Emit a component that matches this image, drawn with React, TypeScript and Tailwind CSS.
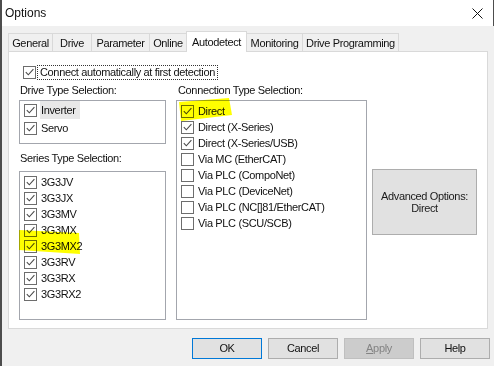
import React from "react";

function Check({ checked }: { checked: boolean }) {
  return (
    <span className="w-[13px] h-[13px] shrink-0 border border-[#6d6d6d] bg-white flex items-center justify-center">
      {checked && (
        <svg width="11" height="11" viewBox="0 0 11 11">
          <path d="M1.8 5.2 L4.3 7.8 L9.4 2.2" stroke="#4a4a4a" strokeWidth="1.1" fill="none" />
        </svg>
      )}
    </span>
  );
}

function Row({ label, checked, h = 16, sel }: { label: string; checked: boolean; h?: number; sel?: boolean }) {
  return (
    <div className={`flex items-center pl-[4px] gap-[3px] ${h === 18 ? "h-[18px]" : "h-[16px]"}`}>
      <Check checked={checked} />
      <span className={`px-[1px] leading-[18px] whitespace-nowrap ${sel ? "bg-[#e8e8e8] pr-[4px]" : ""}`}>{label}</span>
    </div>
  );
}

const tabs = [
  { name: "General", w: "w-[45px]" },
  { name: "Drive", w: "w-[40px]" },
  { name: "Parameter", w: "w-[59px]" },
  { name: "Online", w: "w-[38px]" },
  { name: "Autodetect", w: "w-[61px]", active: true },
  { name: "Monitoring", w: "w-[57px]" },
  { name: "Drive Programming", w: "w-[97px]" },
];

const series = ["3G3JV", "3G3JX", "3G3MV", "3G3MX", "3G3MX2", "3G3RV", "3G3RX", "3G3RX2"];

const conns: [string, boolean][] = [
  ["Direct", true],
  ["Direct (X-Series)", true],
  ["Direct (X-Series/USB)", true],
  ["Via MC (EtherCAT)", false],
  ["Via PLC (CompoNet)", false],
  ["Via PLC (DeviceNet)", false],
  ["Via PLC (NC[]81/EtherCAT)", false],
  ["Via PLC (SCU/SCB)", false],
];

export default function App() {
  return (
    <div className="w-[494px] h-[366px] flex flex-col bg-[#f0f0f0] border-l-2 border-[#4d4d4d] font-['Liberation_Sans',sans-serif] text-[11px] tracking-[-0.35px] text-[#111] overflow-hidden">
      {/* Title bar */}
      <div className="h-[26px] shrink-0 bg-white flex items-center justify-between pl-[3px] pr-[10px] border-r border-[#4d4d4d]">
        <span className="text-[12px] tracking-normal">Options</span>
        <svg width="11" height="11" viewBox="0 0 11 11">
          <path d="M0.5 0.5 L10.5 10.5 M10.5 0.5 L0.5 10.5" stroke="#111" strokeWidth="1" />
        </svg>
      </div>

      <div className="flex-1 flex flex-col pt-[7px] px-[6px]">
        {/* Tabs */}
        <div className="flex items-end h-[18px] relative z-10">
          {tabs.map((t) =>
            t.active ? (
              <div
                key={t.name}
                className={`${t.w} h-[21px] -mb-[1px] -mr-px bg-white border border-b-0 border-[#d9d9d9] flex items-start justify-center pt-[2px] whitespace-nowrap relative z-10`}
              >
                {t.name}
              </div>
            ) : (
              <div
                key={t.name}
                className={`${t.w} h-[18px] border-t border-l border-r border-[#d9d9d9] -mr-px flex items-center justify-center pt-[1px] whitespace-nowrap`}
              >
                {t.name}
              </div>
            )
          )}
        </div>

        {/* Tab page */}
        <div className="h-[278px] shrink-0 bg-white border border-[#d9d9d9] pl-[10px] flex flex-col">
          <div className="h-[15px] mt-[13px] ml-[4px] flex items-center">
            <Check checked />
            <span className="ml-[1px] h-[15px] flex items-center px-[2px] border border-dotted border-[#333] whitespace-nowrap">
              Connect automatically at first detection
            </span>
          </div>

          <div className="flex mt-[3px]">
            {/* Left column */}
            <div className="w-[147px] flex flex-col">
              <div className="h-[14px] leading-[14px] pl-[1px]">Drive Type Selection:</div>
              <div className="mt-[3px] h-[44px] border border-[#a3a6ad]">
                <Row label="Inverter" checked h={18} sel />
                <Row label="Servo" checked h={18} />
              </div>
              <div className="h-[14px] leading-[14px] pl-[1px] mt-[7px]">Series Type Selection:</div>
              <div className="relative mt-[6px] h-[149px] border border-[#a3a6ad] pt-[2px]">
                <svg className="absolute -left-px top-[58px] mix-blend-multiply" width="62" height="26" viewBox="0 0 62 26">
                  <path d="M0 0 L60 3 L61 24 L0 20 Z" fill="#ffff00" />
                </svg>
                {series.map((s) => (
                  <Row key={s} label={s} checked />
                ))}
              </div>
            </div>

            {/* Middle column */}
            <div className="ml-[10px] w-[191px] flex flex-col">
              <div className="h-[14px] leading-[14px] pl-[2px]">Connection Type Selection:</div>
              <div className="relative mt-[3px] h-[220px] border border-[#a3a6ad] pt-[2px]">
                <svg className="absolute left-[1px] -top-[4px] mix-blend-multiply" width="56" height="26" viewBox="0 0 56 26">
                  <path d="M1 5 L51 1 L54 18 L3 24 Z" fill="#ffff00" />
                </svg>
                {conns.map(([c, on]) => (
                  <Row key={c} label={c} checked={on} />
                ))}
              </div>
            </div>

            {/* Right column */}
            <div className="ml-[5px] w-[105px] pt-[86px]">
              <div className="h-[66px] bg-[#e1e1e1] border border-[#adadad] flex flex-col items-center justify-center leading-[12px] text-[#1a1a1a]">
                <span>Advanced Options:</span>
                <span>Direct</span>
              </div>
            </div>
          </div>
        </div>

        {/* Dialog buttons */}
        <div className="flex justify-end gap-[6px] pt-[9px] -mr-[2px]">
          <button className="w-[70px] h-[21px] bg-[#e1e1e1] border border-[#0078d7]">OK</button>
          <button className="w-[70px] h-[21px] bg-[#e1e1e1] border border-[#adadad]">Cancel</button>
          <button className="w-[70px] h-[21px] bg-[#cccccc] border border-[#bfbfbf] text-[#838383]">
            <span className="underline">A</span>pply
          </button>
          <button className="w-[70px] h-[21px] bg-[#e1e1e1] border border-[#adadad]">Help</button>
        </div>
      </div>
    </div>
  );
}
